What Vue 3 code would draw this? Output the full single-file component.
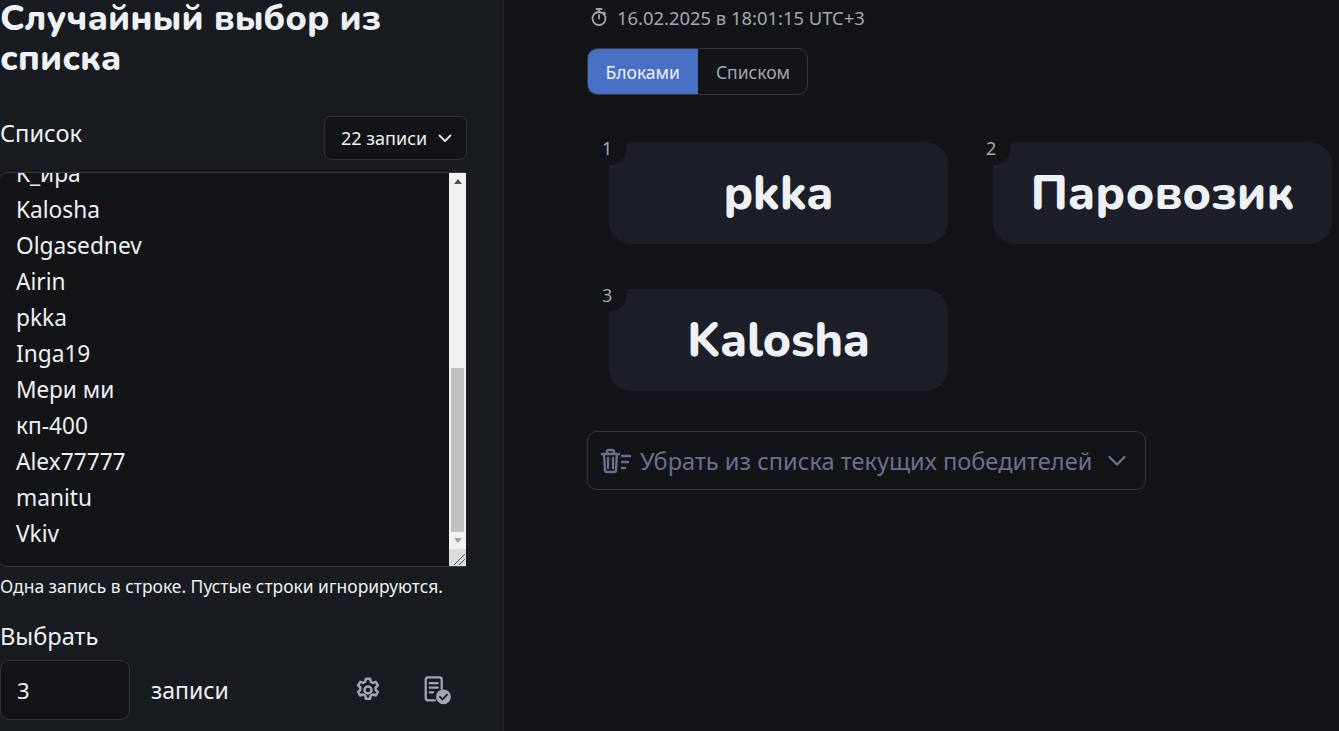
<script setup>
const names = ['K_ира','Kalosha','Olgasednev','Airin','pkka','Inga19','Мери ми','кп-400','Alex77777','manitu','Vkiv']
const winners = ['pkka','Паровозик','Kalosha']
</script>

<template>
  <div class="page">
    <aside class="side">
      <h1 class="title">Случайный выбор из списка</h1>
      <div class="list-head">
        <span class="label">Список</span>
        <button class="count">22 записи
          <svg width="16" height="16" viewBox="0 0 16 16" fill="none" stroke="#e8eaee" stroke-width="1.8" stroke-linecap="round" stroke-linejoin="round"><path d="M2.5 5.5 8 11l5.500-5.500"/></svg>
        </button>
      </div>
      <div class="area">
        <div class="lines">
          <div v-for="n in names" :key="n" class="line">{{ n }}</div>
        </div>
        <div class="bar">
          <div class="arrow-box"><span class="tri up"></span></div>
          <div class="track"><div class="thumb"></div></div>
          <div class="arrow-box"><span class="tri down"></span></div>
          <div class="grip">
            <svg width="17" height="17" viewBox="0 0 17 17" stroke="#555" stroke-width="1" fill="none"><path d="M5 16 16 5M10 16l6-6"/></svg>
          </div>
        </div>
      </div>
      <p class="hint">Одна запись в строке. Пустые строки игнорируются.</p>
      <div class="label pick">Выбрать</div>
      <div class="pick-row">
        <div class="num">3</div>
        <span class="unit">записи</span>
        <svg class="gear" width="30" height="30" viewBox="0 0 24 24" fill="none" stroke="#a3a7b1" stroke-width="2" stroke-linejoin="round"><path d="M10.300 3h3.400l.5 2.400 1.700.9 2.300-.8 1.700 2.900-1.800 1.600v1.900l1.800 1.600-1.700 2.900-2.300-.8-1.700.9-.5 2.400h-3.400l-.5-2.400-1.700-.9-2.300.8-1.700-2.900 1.800-1.600v-1.900L4.100 8.400l1.700-2.900 2.300.8 1.700-.9z"/><circle cx="12" cy="12" r="2.800"/></svg>
        <svg class="doc" width="32" height="32" viewBox="0 0 28 28" fill="none"><path d="M13 23H7a2 2 0 0 1-2-2V5a2 2 0 0 1 2-2h10a2 2 0 0 1 2 2v8" stroke="#a3a7b1" stroke-width="2" stroke-linecap="round"/><path d="M8.500 8h7M8.500 12h7M8.500 16h3" stroke="#a3a7b1" stroke-width="2" stroke-linecap="round"/><circle cx="20.500" cy="20" r="6.500" fill="#a3a7b1"/><path d="m17.500 20 2.200 2.200 3.800-4" stroke="#181b1f" stroke-width="1.700" fill="none" stroke-linecap="round" stroke-linejoin="round"/></svg>
      </div>
    </aside>
    <main class="main">
      <div class="stamp">
        <svg width="20" height="20" viewBox="0 0 20 20" fill="none" stroke="#a3a7b1" stroke-width="1.800" stroke-linecap="round"><circle cx="10" cy="11.500" r="6.500"/><path d="M7.500 2h5M10 2v3M10 11.500V8M15 5.500l1 1"/></svg>
        <span>16.02.2025 в 18:01:15 UTC+3</span>
      </div>
      <div class="tabs">
        <span class="tab on">Блоками</span>
        <span class="tab">Списком</span>
      </div>
      <div class="cards">
        <div v-for="(w, i) in winners" :key="w" class="card">
          <span class="badge">{{ i + 1 }}</span>
          {{ w }}
        </div>
      </div>
      <div class="remove">
        <svg width="32" height="28" viewBox="0 0 32 28" fill="none" stroke="#69718a" stroke-width="2.400" stroke-linecap="round" stroke-linejoin="round"><path d="M2 7h17M7 7V4.500A1.500 1.500 0 0 1 8.500 3h4A1.500 1.500 0 0 1 14 4.500V7M4 7l1 16a2 2 0 0 0 2 2h7a2 2 0 0 0 2-2l1-16M8 11v10M13 11v10M22 9h8M22 15h6M22 21h3"/></svg>
        <span class="remove-text">Убрать из списка текущих победителей</span>
        <svg width="22" height="22" viewBox="0 0 22 22" fill="none" stroke="#69718a" stroke-width="2.400" stroke-linecap="round" stroke-linejoin="round"><path d="m3.500 7 7.500 7.500L18.500 7"/></svg>
      </div>
    </main>
  </div>
</template>

<style scoped>
.page { display: flex; height: 731px; overflow: hidden; background: #131417; font-family: "Noto Sans", sans-serif; color: #eef0f4; }
.side { width: 504px; box-sizing: border-box; flex: none; background: #181b1f; border-right: 1px solid #26282e; padding-right: 36px; }
.title { margin: -1px 0 0; font: 800 36px/40px "Nunito", "Noto Sans", sans-serif; color: #eef1f6; }
.list-head { display: flex; justify-content: space-between; align-items: flex-start; margin-top: 37px; }
.label { font-size: 23.6px; line-height: 30px; color: #eef0f4; }
.list-head .label { margin-top: 2px; }
.count { display: flex; align-items: center; gap: 10px; height: 44px; width: 143px; box-sizing: border-box; padding: 0 0 0 16px; border: 1px solid #30333a; border-radius: 7px; background: #131417; color: #eef0f4; font: 18px "Noto Sans", sans-serif; }
.area { display: flex; margin: 12px 1px 0 0; height: 395px; box-sizing: border-box; background: #131417; border: 1px solid #383a42; border-width: 1px 0 1px 0; border-radius: 7px 0 0 7px; overflow: hidden; }
.lines { flex: 1; padding: 0 16px; margin-top: -17px; }
.line { font-size: 22.7px; line-height: 36px; color: #eef0f4; }
.bar { width: 17px; flex: none; display: flex; flex-direction: column; background: #f1f1f1; }
.arrow-box { height: 17px; flex: none; display: flex; align-items: center; justify-content: center; }
.tri { width: 0; height: 0; border-left: 4px solid transparent; border-right: 4px solid transparent; }
.tri.up { border-bottom: 5px solid #505050; }
.tri.down { border-top: 5px solid #a3a3a3; }
.track { flex: 1; display: flex; flex-direction: column; justify-content: flex-end; padding: 0 2px; }
.thumb { height: 164px; background: #c1c1c1; }
.grip { height: 17px; flex: none; background: #dcdcdc; }
.grip svg { display: block; }
.hint { margin: 8px 0 0; font-size: 17.45px; line-height: 22px; color: #eef0f4; white-space: nowrap; }
.pick { margin-top: 24px; }
.pick-row { display: flex; align-items: center; margin-top: 9px; height: 60px; }
.num { width: 130px; height: 60px; box-sizing: border-box; padding-left: 16px; display: flex; align-items: center; border: 1px solid #30333a; border-radius: 9px; background: #131417; font-size: 22px; }
.unit { margin-left: 21px; font-size: 23px; width: 202px; }
.gear { flex: none; }
.doc { margin-left: 37px; flex: none; }
.main { flex: 1; padding: 0 0 0 83px; min-width: 0; }
.stamp { display: flex; align-items: center; gap: 8px; margin-top: 5px; height: 24px; color: #a3a7b1; font-size: 18.4px; margin-left: 2px; }
.tabs { display: inline-flex; margin-top: 19px; border: 1px solid #33363d; border-radius: 10px; overflow: hidden; height: 47px; box-sizing: border-box; }
.tab { display: flex; align-items: center; padding: 0 17.5px; font-size: 17.5px; color: #a3a7b1; }
.tab.on { background: #4870c4; color: #eef1f6; margin: -1px 0 -1px -1px; padding: 0 18.5px; }
.cards { display: grid; grid-template-columns: 339px 339px; gap: 45px; margin: 47px 0 0 22px; }
.card { position: relative; height: 102px; display: flex; align-items: center; justify-content: center; border-radius: 22px; background: #1c1f27; font: 800 48px "Nunito", "Noto Sans", sans-serif; color: #eef1f6; }
.badge { position: absolute; left: -22px; top: -12px; width: 40px; height: 35px; box-sizing: border-box; padding-left: 15px; display: flex; align-items: center; background: #131417; border-bottom-right-radius: 18px; font: 400 18px "Noto Sans", sans-serif; color: #a3a7b1; }
.remove { display: flex; align-items: center; width: 559px; height: 59px; box-sizing: border-box; margin-top: 40px; padding: 0 17px 0 12px; border: 1px solid #33363d; border-radius: 10px; color: #69718a; }
.remove-text { font-size: 23.6px; margin-left: 8px; flex: 1; white-space: nowrap; }
</style>
